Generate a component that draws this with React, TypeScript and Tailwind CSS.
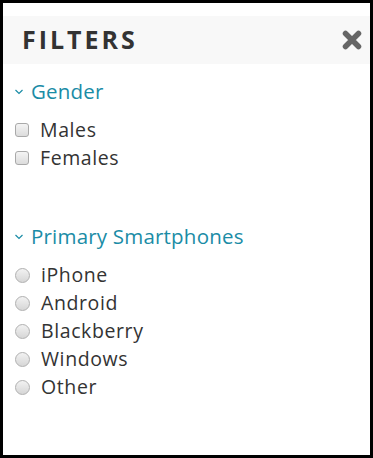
import React from "react";

const font = { fontFamily: '"Open Sans", "DejaVu Sans", sans-serif' };

function Chevron() {
  return (
    <svg width="10" height="7" viewBox="0 0 10 7" className="mr-[7px] -ml-[1px]">
      <path d="M1.5 2 L5 5.5 L8.5 2" fill="none" stroke="#1a8ca6" strokeWidth="1.2" />
    </svg>
  );
}

function CheckRow({ label }: { label: string }) {
  return (
    <label className="flex items-center h-[28px]">
      <span className="w-[14px] h-[14px] rounded-[3px] border border-[#a9a9a9] bg-gradient-to-b from-[#f4f4f4] to-[#dcdcdc] mr-[11px]" />
      <span className="text-[19.5px] tracking-[0.6px] text-[#333]">{label}</span>
    </label>
  );
}

function RadioRow({ label }: { label: string }) {
  return (
    <label className="flex items-center h-[28px]">
      <span className="w-[15px] h-[15px] rounded-full border border-[#b0b0b0] bg-gradient-to-b from-[#f2f2f2] to-[#d6d6d6] mr-[11px]" />
      <span className="text-[19.5px] tracking-[0.6px] text-[#333]">{label}</span>
    </label>
  );
}

export default function App() {
  return (
    <div
      className="w-[373px] h-[458px] border-[3px] border-black bg-white pt-[13px]"
      style={font}
    >
      <div className="h-[48px] bg-[#f8f8f8] flex items-center justify-between pl-[19px] pr-[8px]">
        <span className="text-[25px] font-bold tracking-[3px] text-[#333]">FILTERS</span>
        <svg width="20" height="20" viewBox="0 0 20 20">
          <path d="M3.5 3.5 L16.5 16.5 M16.5 3.5 L3.5 16.5" stroke="#666" strokeWidth="5.5" strokeLinecap="round" />
        </svg>
      </div>

      <div className="pl-[12px] pt-[13px]">
        <div className="flex items-center h-[28px] text-[20.5px] tracking-[0.2px] text-[#1a8ca6]">
          <Chevron />
          Gender
        </div>
        <div className="mt-[11px]">
          <CheckRow label="Males" />
          <CheckRow label="Females" />
        </div>

        <div className="flex items-center h-[28px] text-[20.5px] tracking-[0.2px] text-[#1a8ca6] mt-[50px]">
          <Chevron />
          Primary Smartphones
        </div>
        <div className="mt-[11px]">
          <RadioRow label="iPhone" />
          <RadioRow label="Android" />
          <RadioRow label="Blackberry" />
          <RadioRow label="Windows" />
          <RadioRow label="Other" />
        </div>
      </div>
    </div>
  );
}
